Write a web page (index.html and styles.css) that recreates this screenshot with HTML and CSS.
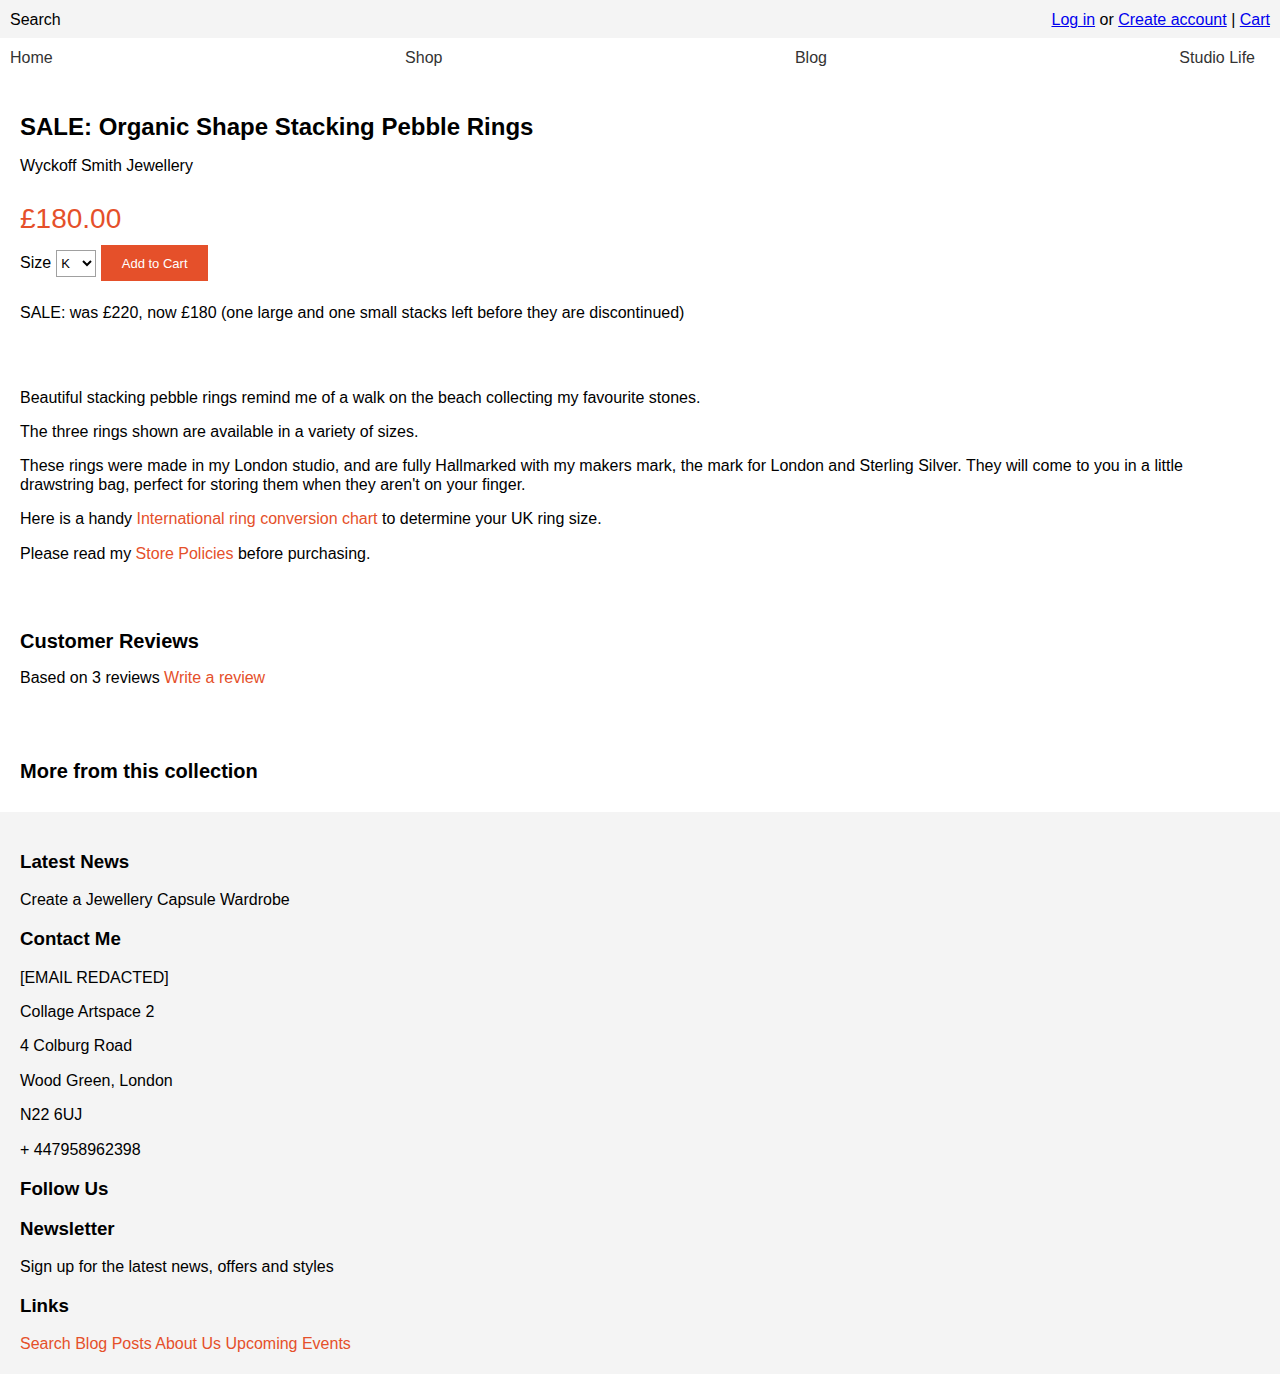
FILE: index.html
```html
<!DOCTYPE html>
<html lang="en">
<head>
<meta charset="utf-8">
<title>SALE: Organic Shape Stacking Pebble Rings</title>
<link rel="stylesheet" href="styles.css">
</head>
<body>
<header class="topbar">
  <span class="topbar-search">Search</span>
  <span class="topbar-account"><a href="#">Log in</a> or <a href="#">Create account</a> | <a href="#">Cart</a></span>
</header>
<nav class="mainnav">
  <a href="#" class="nav-item">Home</a>
  <a href="#" class="nav-item">Shop</a>
  <a href="#" class="nav-item">Blog</a>
  <a href="#" class="nav-item">Studio Life</a>
</nav>
<main class="product">
  <h1 class="product-title">SALE: Organic Shape Stacking Pebble Rings</h1>
  <p class="vendor">Wyckoff Smith Jewellery</p>
  <p class="price">£180.00</p>
  <form class="buy-form">
    <label class="size-label" for="size">Size</label>
    <select id="size" class="size-select"><option>K</option></select>
    <button type="button" class="add-btn">Add to Cart</button>
  </form>
  <p class="sale-note">SALE: was £220, now £180 (one large and one small stacks left before they are discontinued)</p>

  <div class="description">
    <p>Beautiful stacking pebble rings remind me of a walk on the beach collecting my favourite stones.</p>
    <p>The three rings shown are available in a variety of sizes.</p>
    <p>These rings were made in my London studio, and are fully Hallmarked with my makers mark, the mark for London and Sterling Silver. They will come to you in a little drawstring bag, perfect for storing them when they aren't on your finger.</p>
    <p>Here is a handy <a href="#" class="accent">International ring conversion chart</a> to determine your UK ring size.</p>
    <p>Please read my <a href="#" class="accent">Store Policies</a> before purchasing.</p>
  </div>

  <section class="reviews">
    <h3 class="section-title">Customer Reviews</h3>
    <p>Based on 3 reviews <a href="#" class="accent">Write a review</a></p>
  </section>

  <section class="more">
    <h3 class="section-title more-title">More from this collection</h3>
  </section>
</main>
<footer class="footer">
  <h3>Latest News</h3>
  <p>Create a Jewellery Capsule Wardrobe</p>
  <h3>Contact Me</h3>
  <p>[EMAIL REDACTED]</p>
  <p>Collage Artspace 2</p>
  <p>4 Colburg Road</p>
  <p>Wood Green, London</p>
  <p>N22 6UJ</p>
  <p>+ 447958962398</p>
  <h3>Follow Us</h3>
  <h3>Newsletter</h3>
  <p>Sign up for the latest news, offers and styles</p>
  <h3>Links</h3>
  <div class="footer-links"><a href="#" class="accent">Search</a> <a href="#" class="accent">Blog Posts</a> <a href="#" class="accent">About Us</a> <a href="#" class="accent">Upcoming Events</a></div>
</footer>
</body>
</html>
```
FILE: styles.css
```css
html, body {
  margin: 0;
  padding: 0;
}
body {
  font-family: "Liberation Sans", Arial, sans-serif;
  font-size: 16px;
  line-height: 1.15;
  color: #000;
  background: #fff;
}
.topbar {
  box-sizing: border-box;
  display: flex;
  justify-content: space-between;
  align-items: center;
  height: 38px;
  padding: 2px 10px 0;
  background: #f4f4f4;
}
.topbar-account a {
  color: #0000ee;
  text-decoration: underline;
}
.mainnav {
  box-sizing: border-box;
  display: flex;
  justify-content: space-between;
  align-items: center;
  height: 38px;
  padding: 2px 10px 0;
}
.nav-item {
  color: #333;
  text-decoration: none;
  padding-right: 15px;
}
.product {
  padding: 21px 20px 29px;
}
.product-title {
  font-size: 24px;
  font-weight: bold;
  margin: 16px 0;
}
.vendor {
  margin: 16px 0;
}
.price {
  font-size: 28px;
  color: #e5502a;
  margin: 28px 0 10px;
}
.buy-form {
  display: flex;
  align-items: center;
  gap: 5px;
  margin: 0 0 23px;
}
.size-select {
  width: 40px;
  height: 27px;
  margin-top: 1px;
  font-family: "Liberation Sans", Arial, sans-serif;
  font-size: 13px;
  background: #fff;
  border: 1px solid #a0a0a0;
  border-radius: 0;
  color: #000;
}
.add-btn {
  height: 36px;
  width: 107px;
  padding: 0;
  border: none;
  background: #e5502a;
  color: #fff;
  font-family: "Liberation Sans", Arial, sans-serif;
  font-size: 13px;
}
.sale-note {
  margin: 0 0 16px;
}
.description {
  margin-top: 66px;
}
.description p {
  margin: 16px 0;
}
.accent {
  color: #e5502a;
  text-decoration: none;
}
.reviews {
  margin-top: 67px;
}
.section-title {
  font-size: 20px;
  font-weight: bold;
  margin: 0 0 16px;
}
.reviews p {
  margin: 16px 0 0;
}
.more {
  margin-top: 73px;
}
.more-title {
  margin: 0;
}
.footer {
  background: #f4f4f4;
  padding: 20px 20px 22px;
}
.footer h3 {
  font-size: 18.72px;
  font-weight: bold;
  margin: 18.72px 0;
}
.footer p {
  margin: 16px 0;
}
.footer-links {
  margin: 0;
}
```
